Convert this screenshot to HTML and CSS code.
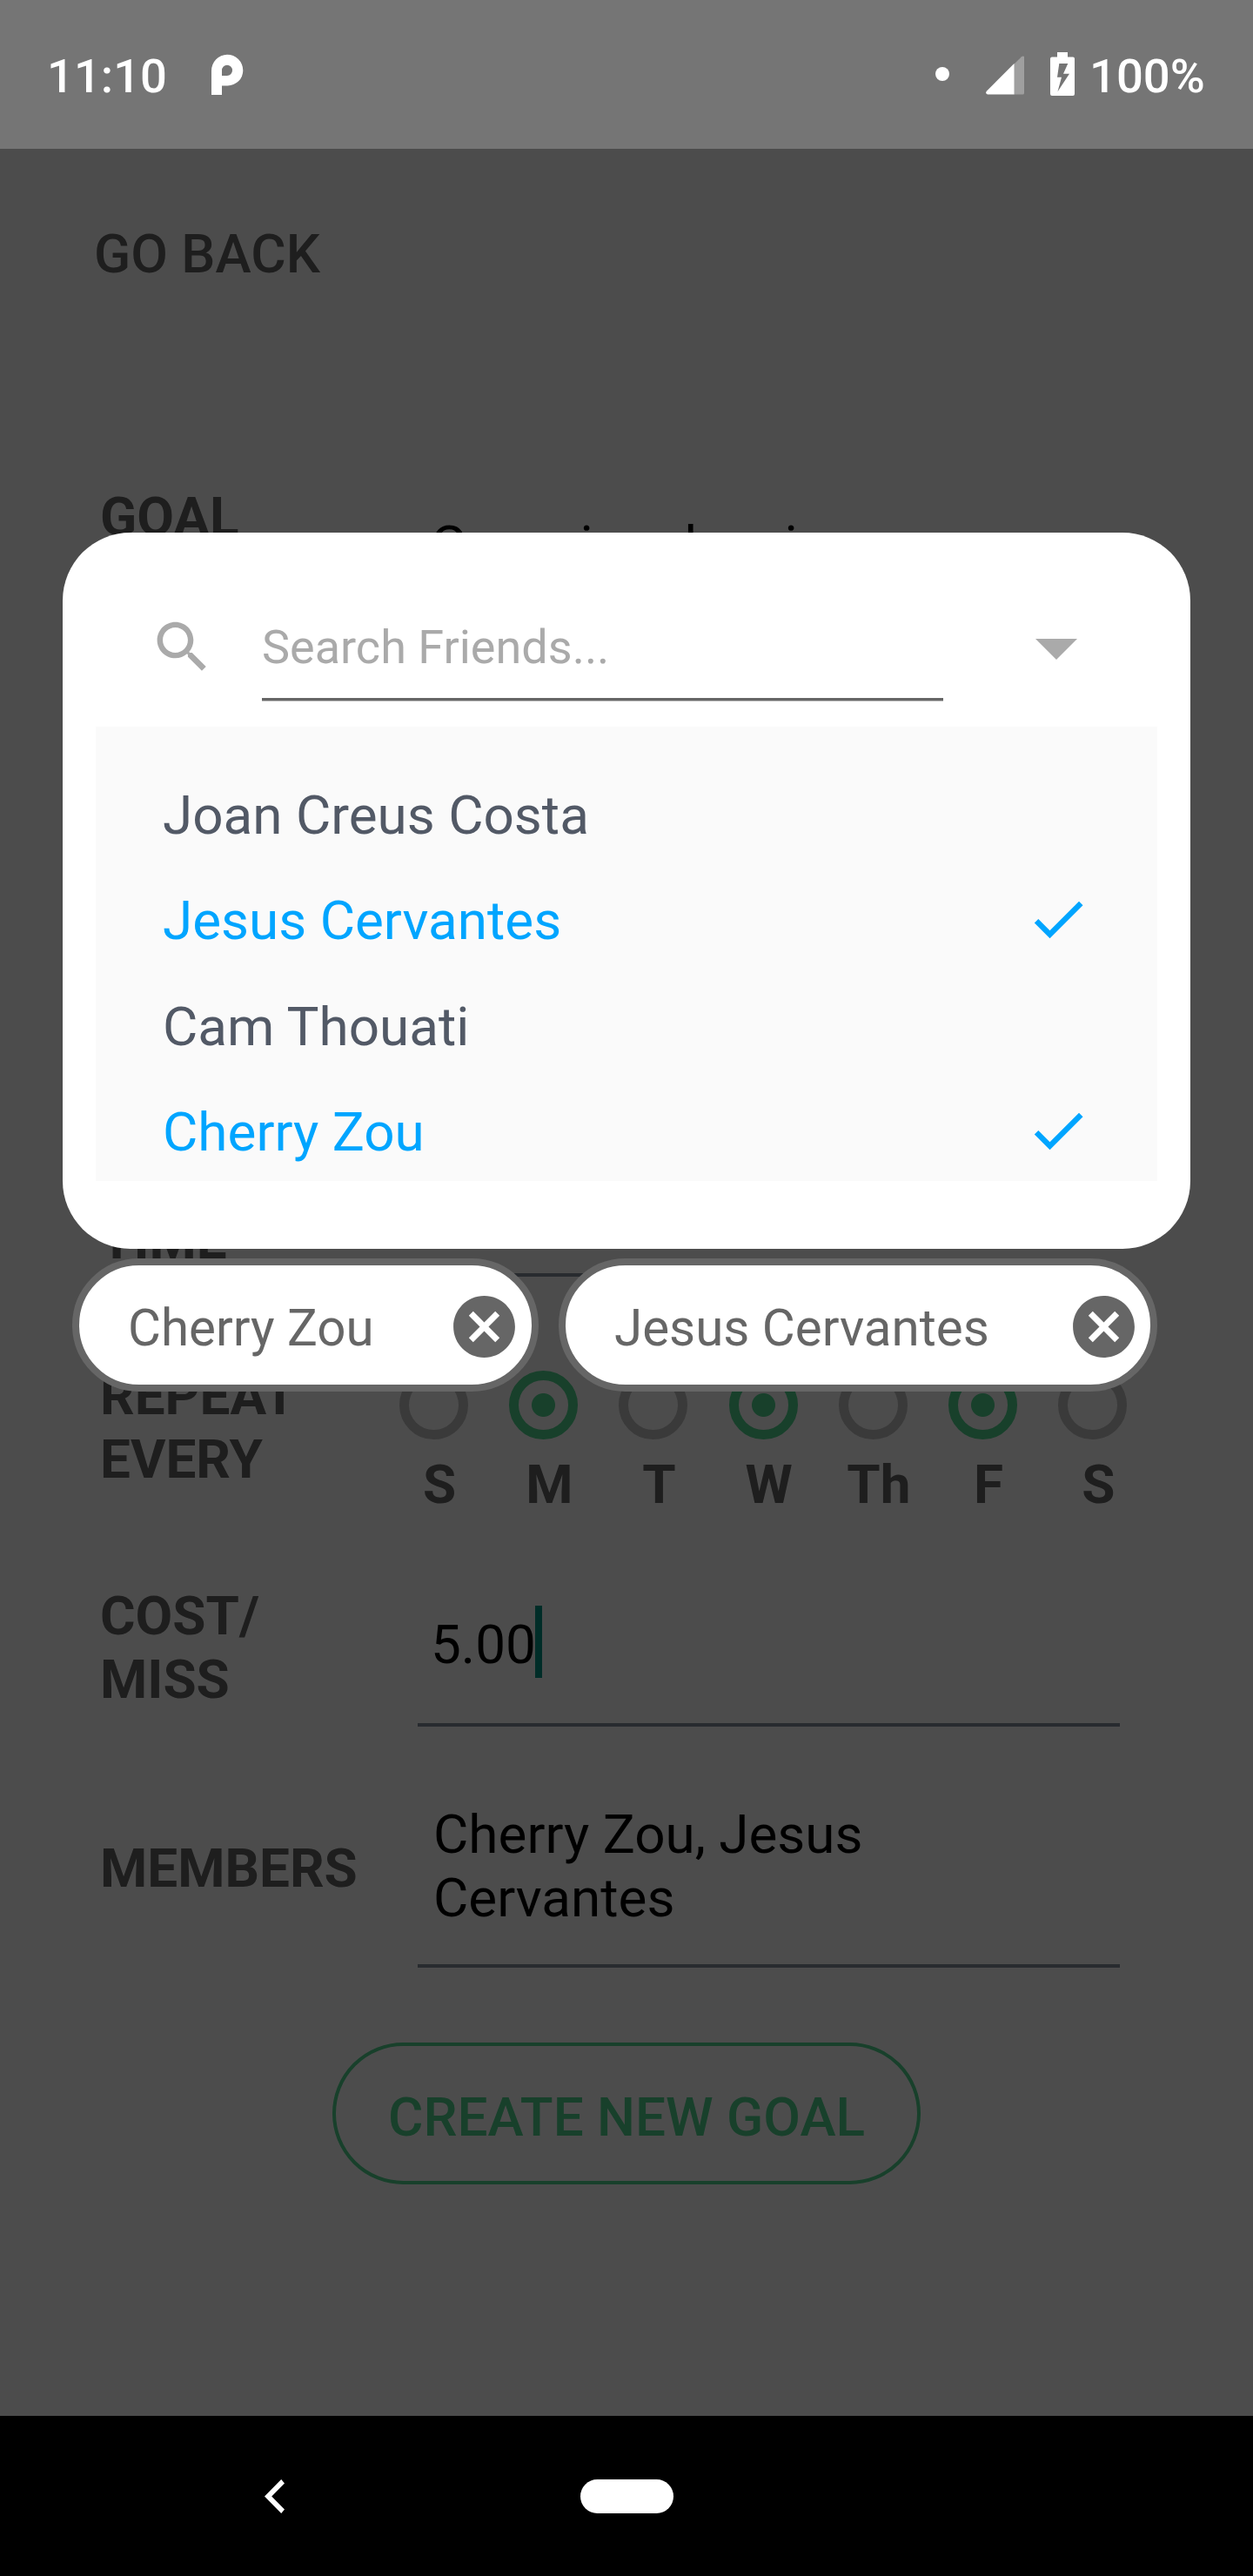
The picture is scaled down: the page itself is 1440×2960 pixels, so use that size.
FILE: index.html
```html
<!DOCTYPE html>
<html lang="en">
<head>
<meta charset="utf-8">
<title>New goal</title>
<link rel="stylesheet" href="styles.css">
</head>
<body>
<header class="status">
  <span class="clock">11:10</span>
  <svg class="status-app" width="38" height="48" viewBox="0 0 38 48"><path fill="#fff" fill-rule="evenodd" d="M1 47V19.500A18.250 18.750 0 0 1 19 .7A18.250 18.250 0 0 1 37.300 19A18 17.500 0 0 1 19.500 36.500H13V47ZM13 25H19A6 6 0 0 0 25 19A6 6.200 0 0 0 13 19Z"/></svg>
  <span class="status-spacer"></span>
  <span class="status-dot"></span>
  <svg class="signal" width="45" height="45" viewBox="0 0 45 45"><path fill="#9f9f9f" d="M32 10 41 1.200Q42.500 0 44 1V43Q44 44.500 42.500 44.500H32Z"/><path fill="#fff" d="M32.500 9V44.500H2Q-1 43.500 .8 40.700Z"/></svg>
  <svg class="battery" width="28" height="50" viewBox="0 0 28 50"><path fill="#fff" d="M8 0H20V5.500H26Q28 5.500 28 7.500V48Q28 50 26 50H2Q0 50 0 48V7.500Q0 5.500 2 5.500H8Z"/><path fill="#757575" d="M10.300 13H20.300L15 24.700H22L8.500 45.300 13 28.700H8Z"/></svg>
  <span class="percent">100%</span>
</header>

<main class="screen">
  <div class="page">
    <div class="back-link">GO BACK</div>
    <div class="row row-goal">
      <div class="label">GOAL</div>
      <div class="value value-goal">Go swing dancing</div>
    </div>
    <div class="row row-time">
      <div class="label">TIME</div>
      <div class="value value-time"></div>
    </div>
    <div class="row row-repeat">
      <div class="label">REPEAT<br>EVERY</div>
      <div class="week">
        <div class="day"><span class="radio"></span>S</div>
        <div class="day"><span class="radio on"></span>M</div>
        <div class="day"><span class="radio"></span>T</div>
        <div class="day"><span class="radio on"></span>W</div>
        <div class="day"><span class="radio"></span>Th</div>
        <div class="day"><span class="radio on"></span>F</div>
        <div class="day"><span class="radio"></span>S</div>
      </div>
    </div>
    <div class="row row-cost">
      <div class="label">COST/<br>MISS</div>
      <div class="value value-cost"><span class="amount">5.00</span><span class="caret"></span></div>
    </div>
    <div class="row row-members">
      <div class="label label-members">MEMBERS</div>
      <div class="value value-members">Cherry Zou, Jesus<br>Cervantes</div>
    </div>
    <div class="create">CREATE NEW GOAL</div>
  </div>

  <div class="overlay">
    <section class="modal">
      <div class="search">
        <svg class="search-icon" width="77" height="77" viewBox="0 0 24 24"><path fill="#aaa" d="M15.500 14h-.79l-.28-.27C15.410 12.590 16 11.110 16 9.500 16 5.910 13.090 3 9.500 3S3 5.910 3 9.500 5.910 16 9.500 16c1.610 0 3.090-.59 4.230-1.570l.27.28v.79l5 4.990L20.490 19l-4.990-5zm-6 0C7.010 14 5 11.990 5 9.500S7.010 5 9.500 5 14 7.010 14 9.500 11.990 14 9.500 14z"/></svg>
        <div class="search-field">Search Friends...</div>
        <svg class="arrow" width="48" height="24" viewBox="0 0 48 24"><path fill="#aaa" d="M0 0H48L24 24Z"/></svg>
      </div>
      <div class="friends">
        <div class="friend">Joan Creus Costa</div>
        <div class="friend picked">Jesus Cervantes<svg width="76" height="76" viewBox="0 0 24 24"><path fill="#00a5ff" d="M9 16.170 4.830 12l-1.420 1.410L9 19 21 7l-1.410-1.410z"/></svg></div>
        <div class="friend">Cam Thouati</div>
        <div class="friend picked">Cherry Zou<svg width="76" height="76" viewBox="0 0 24 24"><path fill="#00a5ff" d="M9 16.170 4.830 12l-1.420 1.410L9 19 21 7l-1.410-1.410z"/></svg></div>
      </div>
    </section>
    <div class="chips">
      <div class="chip chip-cherry">Cherry Zou<svg width="85" height="85" viewBox="0 0 24 24"><path fill="#666" d="M12 2C6.470 2 2 6.470 2 12s4.470 10 10 10 10-4.470 10-10S17.530 2 12 2zm5 13.590L15.590 17 12 13.410 8.410 17 7 15.590 10.590 12 7 8.410 8.410 7 12 10.590 15.590 7 17 8.410 13.410 12 17 15.590z"/></svg></div>
      <div class="chip chip-jesus">Jesus Cervantes<svg width="85" height="85" viewBox="0 0 24 24"><path fill="#666" d="M12 2C6.470 2 2 6.470 2 12s4.470 10 10 10 10-4.470 10-10S17.530 2 12 2zm5 13.590L15.590 17 12 13.410 8.410 17 7 15.590 10.590 12 7 8.410 8.410 7 12 10.590 15.590 7 17 8.410 13.410 12 17 15.590z"/></svg></div>
    </div>
  </div>
</main>

<nav class="navbar">
  <svg class="nav-back" width="23" height="39" viewBox="0 0 23 39"><path fill="#fff" d="M19.200 0 23 4.500 8.200 19.500 23 34.500 19.200 39 0 19.500Z"/></svg>
  <span class="nav-home"></span>
</nav>
</body>
</html>
```
FILE: styles.css
```css
* { box-sizing: border-box; }

body {
  margin: 0;
  width: 1440px;
  height: 2960px;
  display: flex;
  flex-direction: column;
  overflow: hidden;
  font-family: Roboto, "Liberation Sans", sans-serif;
  font-size: 62px;
  line-height: 73px;
  background: #fff;
}

svg { display: block; flex: none; }

/* Status bar */
.status {
  height: 171px;
  flex: none;
  display: flex;
  align-items: flex-start;
  padding: 56px 55px 0 54px;
  background: #757575;
  color: #fff;
  font-size: 54.400px;
  font-weight: 500;
  line-height: 64px;
  white-space: nowrap;
}
.clock { width: 188px; }
.status-app { margin-top: 6px; }
.status-spacer { flex: 1; }
.status-dot { width: 16px; height: 16px; margin: 21px 42px 0 0; border-radius: 50%; background: #fff; }
.signal { margin: 8px 29px 0 0; }
.battery { margin: 4px 17px 0 0; }
.percent { width: 133px; }

/* Form under the overlay */
.screen { position: relative; height: 2605px; flex: none; }
.page { padding: 84px 153px 0 115px; color: #646464; }
.back-link { height: 302px; margin-left: -7px; font-weight: 500; }
.row { display: grid; grid-template-columns: 365px 807px; align-items: start; }
.label { font-weight: 700; }
.row-goal { height: 831px; }
.row-time { height: 179px; }
.row-repeat { height: 253px; }
.row-cost { height: 251px; }
.value { color: #000; border-bottom: 4px solid #85919f; }
.value-goal { padding: 33px 0 0 15px; border: 0; }
.value-time { height: 79px; }
.value-cost { display: flex; height: 164px; padding: 25px 0 0 15px; }
.amount { width: 120px; padding-top: 8px; }
.caret { width: 8px; height: 83px; background: #009688; }
.label-members { padding-top: 39px; }
.value-members { height: 190px; padding-left: 18px; }

.week { display: grid; grid-template-columns: repeat(7, 126.200px); margin-left: -38px; padding-top: 8px; }
.day { display: flex; flex-direction: column; align-items: center; gap: 15px; font-weight: 700; }
.radio {
  width: 79px;
  height: 79px;
  margin-right: 13px;
  border: 11.500px solid #c1c1c1;
  border-radius: 50%;
}
.radio.on { border-color: #50d58f; background: radial-gradient(circle, #50d58f 13px, transparent 14px); }

.create {
  width: 676px;
  height: 163px;
  margin: 86px 0 0 267px;
  padding-top: 45px;
  border: 4px solid #50d58f;
  border-radius: 82px;
  color: #50d58f;
  font-weight: 500;
  text-align: center;
  white-space: nowrap;
}

/* Friend picker */
.overlay { position: absolute; inset: 0; padding: 441px 72px 0; background: rgba(0, 0, 0, .7); }
.modal { height: 823px; padding: 0 38px; border-radius: 78px; background: #fff; }
.search { display: flex; height: 223px; padding: 93px 92px 0 61px; }
.search-field {
  width: 783px;
  height: 100px;
  margin-left: 53px;
  padding-top: 6px;
  border-bottom: 3px solid #666;
  box-shadow: 0 1px #bbb;
  color: #aaa;
  font-size: 54px;
  line-height: 66px;
}
.arrow { margin: 29px 0 0 106px; }
.friends { height: 522px; padding: 41px 76px 0 77px; background: #fafafa; overflow: hidden; }
.friend { display: flex; height: 121.300px; align-items: center; justify-content: space-between; color: #525966; }
.friend.picked { color: #00a5ff; }
.friend svg { margin-top: -4px; }

.chips { display: flex; gap: 23px; margin: 11px 0 0 11px; }
.chip {
  display: flex;
  height: 153px;
  align-items: center;
  justify-content: space-between;
  padding: 7px 12px 0 56px;
  border: 8px solid #666;
  border-radius: 77px;
  background: #fff;
  color: #666;
  font-size: 58.300px;
  white-space: nowrap;
}
.chip svg { margin-top: -4px; }
.chip-cherry { width: 536px; }
.chip-jesus { width: 688px; padding-right: 11px; }

/* System navigation */
.navbar { height: 184px; flex: none; display: flex; padding: 73px 0 0 304px; background: #000; }
.nav-home { width: 107px; height: 39px; margin-left: 340px; border-radius: 20px; background: #fff; }
```
